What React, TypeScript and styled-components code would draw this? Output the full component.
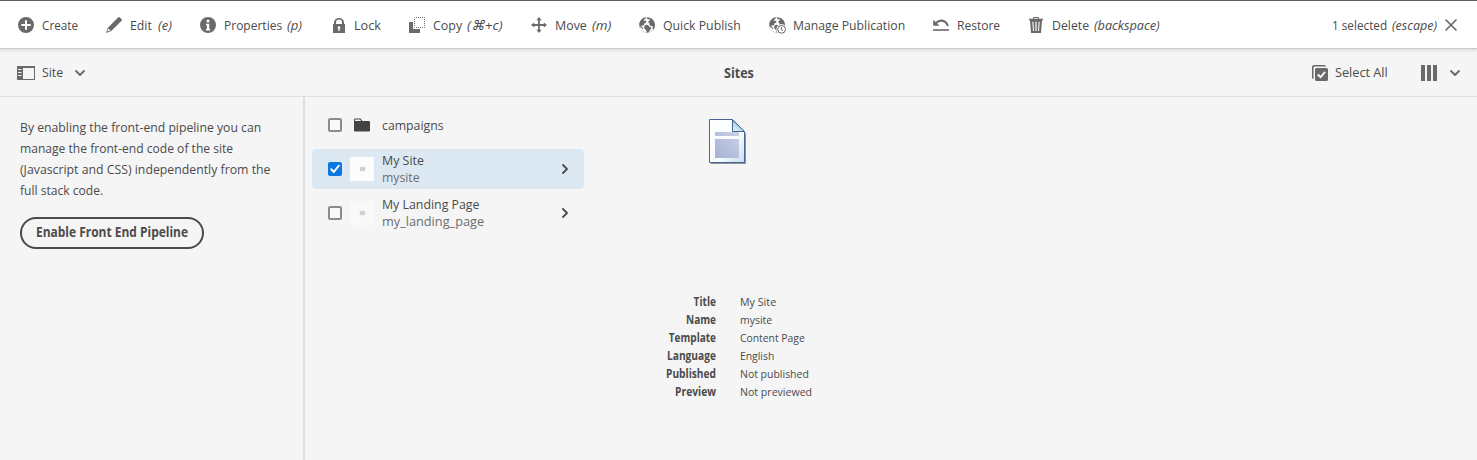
import React from 'react';
import styled, { createGlobalStyle, css } from 'styled-components';

const GlobalStyle = createGlobalStyle`
  *, *::before, *::after { box-sizing: border-box; }
  body {
    margin: 0;
    background: #f5f5f5;
    color: #4b4b4b;
    font-family: "Open Sans", "Noto Sans", sans-serif;
    font-size: 13.5px;
  }
  p, h1, ul, dl, dd, dt { margin: 0; padding: 0; }
`;

type TextProps = { $w?: number; $stretch?: number };

/* Condensed text: the glyphs are narrowed to $stretch percent of their width. */
const condensed = css<TextProps>`
  display: block;
  white-space: nowrap;
  transform: scaleX(${(p) => (p.$stretch ?? 91) / 100});
  transform-origin: 0 50%;
  ${(p) => (p.$w ? `width: ${p.$w}px;` : '')}
`;

const Page = styled.div`
  display: flex;
  flex-direction: column;
  height: 460px;
  overflow: hidden;
`;

const ActionBar = styled.header`
  position: relative;
  display: flex;
  justify-content: space-between;
  align-items: center;
  flex: 0 0 49px;
  padding: 0 20px 0 18px;
  background: #fff;
  border-top: 1px solid #5d5d62;
  border-bottom: 1px solid #c9cccb;
  box-shadow: 0 1px 4px rgba(0, 0, 0, 0.13);
`;

const Actions = styled.div`
  display: flex;
  gap: 28px;
`;

const Action = styled.button`
  display: flex;
  align-items: center;
  height: 46px;
  padding: 0;
  border: 0;
  background: none;
  color: inherit;
  font: inherit;
  line-height: 18px;
`;

const Icon = styled.svg<{ $size?: number }>`
  display: block;
  flex: none;
  width: ${(p) => p.$size ?? 16}px;
  height: ${(p) => p.$size ?? 16}px;
  fill: #6a6a6a;
  overflow: visible;
`;

const Label = styled.span<TextProps & { $ml?: number }>`
  ${condensed}
  margin-left: ${(p) => p.$ml ?? 8}px;
  text-align: left;
`;

const Shortcut = styled.em<TextProps>`
  ${condensed}
  margin-left: 5px;
  text-align: left;
`;

const SubBar = styled.nav`
  display: grid;
  grid-template-columns: 1fr auto 1fr;
  align-items: center;
  flex: 0 0 48px;
  padding: 0 16px 0 17px;
  border-bottom: 1px solid #dfdfdf;
`;

const BarGroup = styled.div<{ $end?: boolean }>`
  display: flex;
  align-items: center;
  justify-content: ${(p) => (p.$end ? 'flex-end' : 'flex-start')};
  line-height: 18px;
`;

const BarLabel = styled(Label)`
  padding-bottom: 2px;
`;

const Chevron = styled.svg<{ $ml: number }>`
  display: block;
  flex: none;
  margin-left: ${(p) => p.$ml}px;
  fill: none;
  stroke-linecap: round;
  stroke-linejoin: round;
`;

const Title = styled.h1<TextProps>`
  ${condensed}
  font-size: 13.5px;
  font-weight: 700;
  line-height: 18px;
`;

const Gap = styled.span<{ $w: number }>`
  flex: 0 0 ${(p) => p.$w}px;
`;

const Body = styled.main`
  display: flex;
  flex: 1;
`;

const Rail = styled.aside`
  flex: 0 0 305px;
  min-width: 0;
  padding: 20px;
  border-right: 2px solid #dedede;
`;

const Note = styled.p`
  width: 260px;
  line-height: 21px;
`;

const NoteLine = styled.span<TextProps>`
  ${condensed}
`;

const PillButton = styled.button`
  display: block;
  width: 184px;
  height: 32px;
  margin-top: 16px;
  padding: 0 14px 2px;
  border: 2px solid #4b4b4b;
  border-radius: 16px;
  background: transparent;
  color: inherit;
  font: 700 13.5px/18px "Open Sans", sans-serif;
  text-align: left;
`;

const PillText = styled.span<TextProps>`
  ${condensed}
`;

const Column = styled.ul`
  flex: 0 0 287px;
  display: flex;
  flex-direction: column;
  gap: 4px;
  padding: 8px 8px 0 7px;
  list-style: none;
`;

const Item = styled.li<{ $selected?: boolean }>`
  display: flex;
  align-items: center;
  height: 40px;
  padding: 0 14px 0 16px;
  border-radius: 4px;
  background: ${(p) => (p.$selected ? '#dce8f2' : 'transparent')};
`;

const Box = styled.span<{ $checked?: boolean }>`
  display: grid;
  place-items: center;
  flex: 0 0 14px;
  height: 14px;
  border: 2px solid ${(p) => (p.$checked ? '#0b78e3' : '#8c8c8c')};
  border-radius: 2px;
  background: ${(p) => (p.$checked ? '#0b78e3' : '#f9f9f9')};
`;

const Thumb = styled.span<{ $bg: string }>`
  display: grid;
  place-items: center;
  width: 24px;
  height: 24px;
  margin: 0 8px;
  background: ${(p) => p.$bg};
`;

const Speck = styled.span`
  width: 5px;
  height: 4px;
  border-radius: 1px;
  background: #cfcfcf;
  box-shadow: 0 0 2px #dedede;
`;

const Names = styled.div<{ $single?: boolean }>`
  flex: 1;
  line-height: 17px;
  padding-${(p) => (p.$single ? 'top' : 'bottom')}: 1px;
`;

const ItemTitle = styled.div<TextProps>`
  ${condensed}
`;

const ItemName = styled.div<TextProps>`
  ${condensed}
  color: #6e6e6e;
`;

const Preview = styled.section`
  width: 272px;
  display: flex;
  flex-direction: column;
  align-items: center;
  padding-top: 22px;
`;

const Sheet = styled.svg`
  display: block;
  margin-left: 2px;
`;

const Facts = styled.dl`
  display: grid;
  grid-template-columns: 124px 124px;
  column-gap: 24px;
  margin-top: 127px;
  font-size: 11.5px;
  line-height: 18px;
`;

const Term = styled.dt<TextProps>`
  ${condensed}
  transform-origin: 100% 50%;
  font-weight: 700;
  text-align: right;
`;

const Value = styled.dd<TextProps>`
  ${condensed}
`;

const globe = (
  <>
    <circle cx="8" cy="8" r="7.6" fill="none" stroke="#6a6a6a" strokeWidth=".5" opacity=".5" />
    <path d="M7.2.2 4.2 1 1.7 3.2.2 6.600l.4 3.200 1.600.6 1.200 1.400 1 .1-.6-1.500L2.400 9.600l.1-1.400 1.600.5 1.100-1.100.4-1.300 1.800-1.100-.2-1.200-1-.6-1.200.6-.3-1L6.400 1.800z" />
    <path d="M5.800 8.300 7.600 7.700l1.600.6.9 1.100 1.800.7.3 1.400-1.300 1.500-.6 1.500-1.400 1.300-1.100-.2-.5-2-1.400-1.600-.8-1.600z" />
    <path d="M8.600.2 8 1.500l1.300.9L10.400 2l.6 1-1.500 1.200-.1 1.200 1 .5-.2 1.100 1.100 1.700 1.700.3.8.8-.1 1.600.4 1.800 1.500-2.800.4-3.200L15 4l-2.400-2.600z" />
  </>
);

const ic = {
  create: (
    <path fillRule="evenodd" d="M8 0a8 8 0 1 0 0 16A8 8 0 0 0 8 0zm1 3.300v3.700h3.700v2H9v3.700H7V9H3.300V7H7V3.300z" />
  ),
  edit: (
    <path fillRule="evenodd" d="M12 .6 13.400 0 16 2.600l-.6 1.400L5 14.300 0 16l1.700-5zM2.600 11.500l-1.200 3.100 3.100-1.100z" />
  ),
  info: (
    <path fillRule="evenodd" d="M8 0a8 8 0 1 0 0 16A8 8 0 0 0 8 0zm0 2.400a1.500 1.500 0 1 1 0 3 1.500 1.500 0 0 1 0-3zM6 6.800h3.200V12h1v1.400H5.900V12h1V8.200H6z" />
  ),
  lock: (
    <path fillRule="evenodd" d="M4 7V5.600a5 4.600 0 0 1 10 0V7h1v9H3V7zm2 0h6V5.600a3 3 0 0 0-6 0zm3 2.200a1.400 1.400 0 0 0-.7 2.600V14h1.400v-2.200A1.400 1.400 0 0 0 9 9.200z" />
  ),
  copy: (
    <>
      <path d="M0 5h4v7h7v4H0z" />
      <rect x="5.5" y=".5" width="10" height="10" fill="none" stroke="#6a6a6a" strokeDasharray="1 1" strokeDashoffset=".5" />
    </>
  ),
  move: (
    <path d="M8 0l2.600 3.200H8.900v3.900h3.900V5.400L16 8l-3.200 2.600V8.900H8.900v3.900h1.700L8 16l-2.600-3.200h1.700V8.900H3.200v1.700L0 8l3.200-2.600v1.700h3.900V3.200H5.400z" />
  ),
  globe,
  manage: (
    <>
      {globe}
      <circle cx="12.6" cy="12.3" r="5.2" fill="#fff" />
      <circle cx="12.6" cy="12.3" r="3.9" fill="#fff" stroke="#6a6a6a" strokeWidth="1" />
      <path d="M12.400 9.800v2.800l1.700 1.200" fill="none" stroke="#6a6a6a" strokeWidth="1" />
    </>
  ),
  restore: (
    <>
      <path d="M0 12.200h16v1.600H0z" />
      <path d="M.2 2.800v6h6.200L4.200 6.500C6.700 3.900 11.700 3.700 14.100 9.200L15.900 9C13.800 1.700 6.500.9 2.700 5z" />
    </>
  ),
  trash: (
    <path fillRule="evenodd" d="M5 1.700V.8L5.700 0h4.600l.7.8v.9h4V3.200h-1L13 16H3L2 3.200H1V1.700zm1.100 0h3.800V1H6.100zM4.300 4.700 5 14h1l-.6-9.300zM7.400 4.700V14h1.200V4.700zM10.600 4.700 10 14h1l.7-9.300z" />
  ),
};

type ActionDef = {
  icon: keyof typeof ic;
  label: string;
  w: number;
  s: number;
  key?: string;
  kw?: number;
  ks?: number;
};

const actions: ActionDef[] = [
  { icon: 'create', label: 'Create', w: 36, s: 87 },
  { icon: 'edit', label: 'Edit', w: 23, s: 91, key: '(e)', kw: 14, ks: 96 },
  { icon: 'info', label: 'Properties', w: 58, s: 89, key: '(p)', kw: 15, ks: 97 },
  { icon: 'lock', label: 'Lock', w: 27, s: 94 },
  { icon: 'copy', label: 'Copy', w: 29, s: 92, key: '(⌘+c)', kw: 36, ks: 100 },
  { icon: 'move', label: 'Move', w: 32, s: 92, key: '(m)', kw: 19, ks: 100 },
  { icon: 'globe', label: 'Quick Publish', w: 78, s: 91 },
  { icon: 'manage', label: 'Manage Publication', w: 112, s: 90.5 },
  { icon: 'restore', label: 'Restore', w: 43, s: 89 },
  { icon: 'trash', label: 'Delete', w: 37, s: 91, key: '(backspace)', kw: 66, ks: 94 },
];

const facts: [string, string, number, number][] = [
  ['Title', 'My Site', 88, 93],
  ['Name', 'mysite', 87, 91],
  ['Template', 'Content Page', 87, 90],
  ['Language', 'English', 88.6, 90],
  ['Published', 'Not published', 88.6, 91],
  ['Preview', 'Not previewed', 89, 92],
];

const DownArrow = ({ ml }: { ml: number }) => (
  <Chevron $ml={ml} width="10" height="6" viewBox="0 0 10 6" stroke="#6a6a6a" strokeWidth="1.8">
    <path d="M1 1l4 4 4-4" />
  </Chevron>
);

const RightArrow = () => (
  <Chevron $ml={0} width="10" height="10" viewBox="0 0 10 10" stroke="#4b4b4b" strokeWidth="1.8">
    <path d="M3 1l4 4-4 4" />
  </Chevron>
);

const PageIcon = () => (
  <Sheet width="40" height="47" viewBox="0 0 40 47">
    <defs>
      <linearGradient id="paper" x1="0" y1="0" x2="1" y2="1">
        <stop offset="0" stopColor="#ffffff" />
        <stop offset=".6" stopColor="#f8fbfe" />
        <stop offset="1" stopColor="#c8deef" />
      </linearGradient>
      <linearGradient id="block" x1="0" y1="1" x2="1" y2="0">
        <stop offset="0" stopColor="#a3b3d6" />
        <stop offset="1" stopColor="#ccd0e2" />
      </linearGradient>
      <linearGradient id="fold" x1="0" y1="1" x2="1" y2="0">
        <stop offset="0" stopColor="#eefafe" />
        <stop offset="1" stopColor="#5db4dc" />
      </linearGradient>
    </defs>
    <path d="M2 2.500h22.500l12.500 12v30.500H2z" fill="#77797c" opacity=".8" />
    <path d="M.5.500h23l12 12v31H.5z" fill="url(#paper)" stroke="#4a6497" />
    <path d="M6 13h24v4H6zM6 20h24v19H6z" fill="url(#block)" />
    <path d="M23.500 1l12 11.500h-12z" fill="url(#fold)" stroke="#46618f" />
  </Sheet>
);

export default function App() {
  return (
    <Page>
      <GlobalStyle />
      <ActionBar>
        <Actions>
          {actions.map((a) => (
            <Action key={a.label}>
              <Icon viewBox="0 0 16 16">{ic[a.icon]}</Icon>
              <Label $w={a.w} $stretch={a.s}>{a.label}</Label>
              {a.key && <Shortcut $w={a.kw} $stretch={a.ks}>{a.key}</Shortcut>}
            </Action>
          ))}
        </Actions>
        <Action>
          <Label $w={55} $stretch={87}>1 selected</Label>
          <Shortcut $w={45} $stretch={93}>(escape)</Shortcut>
          <Gap $w={8} />
          <Icon $size={12} viewBox="0 0 12 12">
            <path d="M1 1l10 10M11 1L1 11" fill="none" stroke="#6a6a6a" strokeWidth="1.7" strokeLinecap="round" />
          </Icon>
        </Action>
      </ActionBar>

      <SubBar>
        <BarGroup>
          <Icon $size={18} viewBox="0 0 18 18">
            <path fillRule="evenodd" d="M0 2h18v14H0zm6 2v11h11V4zM1.200 5v1H4.500V5zm0 3v1H4.500V8zm0 3v1H4.500v-1z" />
          </Icon>
          <BarLabel $w={21} $stretch={91} $ml={7}>Site</BarLabel>
          <DownArrow ml={12} />
        </BarGroup>
        <Title $w={31} $stretch={93}>Sites</Title>
        <BarGroup $end>
          <Icon viewBox="0 0 16 16">
            <path d="M0 2a2 2 0 0 1 2-2h10.500a1.500 1.500 0 0 1 1.500 1.500H3A1.500 1.500 0 0 0 1.500 3v11A1.500 1.500 0 0 1 0 12.500z" />
            <path fillRule="evenodd" d="M4.500 3h10A1.500 1.500 0 0 1 16 4.500v10a1.500 1.500 0 0 1-1.500 1.500h-10A1.500 1.500 0 0 1 3 14.500v-10A1.500 1.500 0 0 1 4.500 3zm4.200 10.500 5.100-6-1.500-1.300-3.700 4.600-2-2L5 10.200z" />
          </Icon>
          <BarLabel $w={53} $stretch={94} $ml={7}>Select All</BarLabel>
          <Gap $w={33} />
          <Icon viewBox="0 0 16 16">
            <path d="M0 0h4v16H0zM6 0h4v16H6zM12 0h4v16h-4z" />
          </Icon>
          <DownArrow ml={13} />
          <Gap $w={1} />
        </BarGroup>
      </SubBar>

      <Body>
        <Rail>
          <Note>
            <NoteLine $stretch={90.5}>By enabling the front-end pipeline you can </NoteLine>
            <NoteLine $stretch={89.5}>manage the front-end code of the site </NoteLine>
            <NoteLine $stretch={91}>(Javascript and CSS) independently from the </NoteLine>
            <NoteLine $stretch={89.5}>full stack code.</NoteLine>
          </Note>
          <PillButton><PillText $w={152} $stretch={88.6}>Enable Front End Pipeline</PillText></PillButton>
        </Rail>

        <Column>
          <Item>
            <Box />
            <Thumb $bg="transparent">
              <Icon viewBox="0 0 16 16">
                <path d="M0 2.500A1 1 0 0 1 1 1.500h5.500L8.500 4H15a1 1 0 0 1 1 1v8.500a1 1 0 0 1-1 1H1a1 1 0 0 1-1-1z" fill="#434343" />
                <path d="M1 2.500h5L7.200 4H1z" fill="#f4f4f4" />
              </Icon>
            </Thumb>
            <Names $single><ItemTitle $stretch={91}>campaigns</ItemTitle></Names>
          </Item>
          <Item $selected>
            <Box $checked>
              <svg width="10" height="10" viewBox="0 0 10 10" fill="none" stroke="#fff" strokeWidth="2" strokeLinecap="round" strokeLinejoin="round">
                <path d="M1.300 5.300l2.500 2.700L8.700 1.800" />
              </svg>
            </Box>
            <Thumb $bg="#fcfcfc"><Speck /></Thumb>
            <Names>
              <ItemTitle $stretch={92}>My Site</ItemTitle>
              <ItemName $stretch={90.5}>mysite</ItemName>
            </Names>
            <RightArrow />
          </Item>
          <Item>
            <Box />
            <Thumb $bg="#f9f9f9"><Speck /></Thumb>
            <Names>
              <ItemTitle $stretch={91.5}>My Landing Page</ItemTitle>
              <ItemName $stretch={94.3}>my_landing_page</ItemName>
            </Names>
            <RightArrow />
          </Item>
        </Column>

        <Preview>
          <PageIcon />
          <Facts>
            {facts.map(([term, value, ts, vs]) => (
              <React.Fragment key={term}>
                <Term $stretch={ts}>{term}</Term>
                <Value $stretch={vs}>{value}</Value>
              </React.Fragment>
            ))}
          </Facts>
        </Preview>
      </Body>
    </Page>
  );
}
